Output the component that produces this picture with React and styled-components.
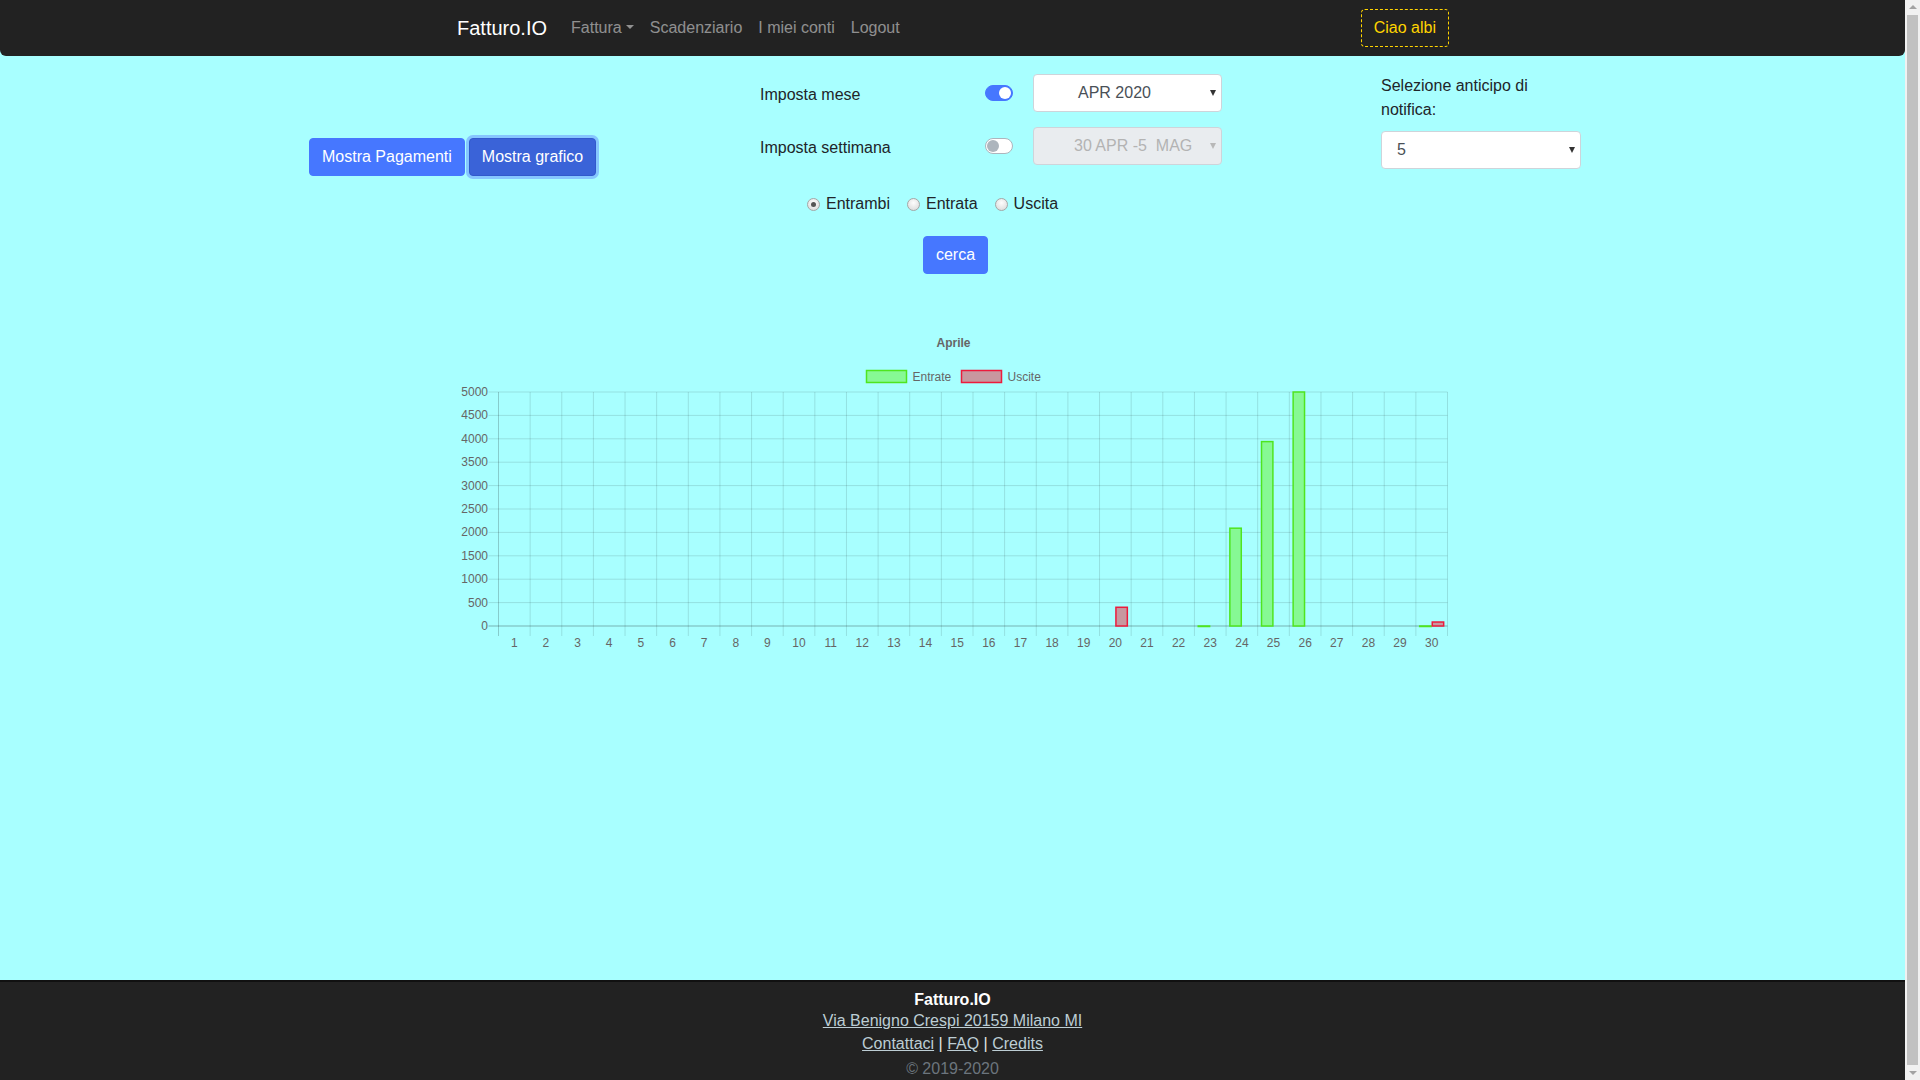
import React from "react";
import styled, { createGlobalStyle, css } from "styled-components";

const GlobalStyle = createGlobalStyle`
  * { box-sizing: border-box; }
  html, body { margin: 0; padding: 0; }
  body {
    font-family: "Liberation Sans", Arial, sans-serif;
    font-size: 16px;
    line-height: 1.5;
    color: #212529;
    background: #a8ffff;
    padding-right: 15px;
  }
`;

const entrate = { 23: 0, 24: 2090, 25: 3940, 26: 5000, 30: 0 };
const uscite = { 20: 400, 30: 85 };

export default function App() {
  return (
    <>
      <GlobalStyle />
      <Navbar>
        <Brand href="#">Fatturo.IO</Brand>
        <NavLink href="#" $dropdown>Fattura</NavLink>
        <NavLink href="#">Scadenziario</NavLink>
        <NavLink href="#">I miei conti</NavLink>
        <NavLink href="#">Logout</NavLink>
        <GreetButton>Ciao albi</GreetButton>
      </Navbar>

      <Main>
        <TopRow>
          {/* left buttons */}
          <LeftCol>
            <Button>Mostra Pagamenti</Button>
            <Button $active>Mostra grafico</Button>
          </LeftCol>

          {/* month / week */}
          <MiddleCol>
            <ControlRow>
              <RowLabel>Imposta mese</RowLabel>
              <Switch $on />
              <Select $w={189} $indent={44}>
                <SelectText>APR 2020</SelectText>
                <Caret />
              </Select>
            </ControlRow>
            <ControlRow>
              <RowLabel>Imposta settimana</RowLabel>
              <Switch />
              <Select $w={189} $indent={40} $disabled>
                <SelectText>30 APR -5&nbsp; MAG</SelectText>
                <Caret $disabled />
              </Select>
            </ControlRow>
          </MiddleCol>

          {/* notification */}
          <RightCol>
            <FieldLabel>Selezione anticipo di notifica:</FieldLabel>
            <Select $w={200} $indent={15}>
              <SelectText>5</SelectText>
              <Caret />
            </Select>
          </RightCol>
        </TopRow>

        <RadioRow>
          <RadioItem>
            <RadioDot $checked />
            Entrambi
          </RadioItem>
          <RadioItem>
            <RadioDot />
            Entrata
          </RadioItem>
          <RadioItem>
            <RadioDot />
            Uscita
          </RadioItem>
        </RadioRow>

        <SearchRow>
          <Button>cerca</Button>
        </SearchRow>

        <ChartWrap>
          <BarChart />
        </ChartWrap>
      </Main>

      <Footer>
        <FooterTitle>Fatturo.IO</FooterTitle>
        <FooterLine $h={22}>
          <FooterLink href="#">Via Benigno Crespi 20159 Milano MI</FooterLink>
        </FooterLine>
        <FooterLine>
          <FooterLink href="#">Contattaci</FooterLink> | <FooterLink href="#">FAQ</FooterLink> |{" "}
          <FooterLink href="#">Credits</FooterLink>
        </FooterLine>
        <Copy>© 2019-2020</Copy>
      </Footer>

      <Scrollbar>
        <ScrollArrow />
        <ScrollThumb />
        <ScrollArrow $down />
      </Scrollbar>
    </>
  );
}

// chart
const X0 = 45.5;
const X1 = 994.5;
const Y0 = 296;
const YT = 62;
const CAT = (X1 - X0) / 30;
const yOf = (v) => Y0 - (v / 5000) * (Y0 - YT);
const days = Array.from({ length: 30 }, (_, i) => i + 1);
const ticks = Array.from({ length: 11 }, (_, i) => i * 500);

function BarChart() {
  return (
    <ChartSvg width="1000" height="330" viewBox="0 0 1000 330">
      <text x="500.5" y="13" textAnchor="middle" dominantBaseline="central" className="title">
        Aprile
      </text>

      {/* legend */}
      <rect x="413.5" y="40.5" width="40" height="12" fill="#86f994" stroke="#4fe51f" strokeWidth="1.5" />
      <text x="459.5" y="46.5" dominantBaseline="central">Entrate</text>
      <rect x="508.5" y="40.5" width="40" height="12" fill="#c8979f" stroke="#ec1b3c" strokeWidth="1.5" />
      <text x="554.5" y="46.5" dominantBaseline="central">Uscite</text>

      {/* grid */}
      {ticks.map((v) => (
        <line
          key={"h" + v}
          x1={X0 - 10}
          x2={X1}
          y1={yOf(v)}
          y2={yOf(v)}
          stroke={v === 0 ? "rgba(0,0,0,0.3)" : "rgba(0,0,0,0.12)"}
          strokeWidth="1"
        />
      ))}
      {Array.from({ length: 31 }, (_, i) => (
        <line
          key={"v" + i}
          x1={X0 + i * CAT}
          x2={X0 + i * CAT}
          y1={YT}
          y2={Y0 + 10}
          stroke={i === 0 ? "rgba(0,0,0,0.2)" : "rgba(0,0,0,0.12)"}
          strokeWidth="1"
        />
      ))}

      {ticks.map((v) => (
        <text key={"yl" + v} x="35" y={yOf(v)} textAnchor="end" dominantBaseline="central">
          {v}
        </text>
      ))}
      {days.map((d) => (
        <text key={"xl" + d} x={X0 + (d - 0.5) * CAT} y="313" textAnchor="middle" dominantBaseline="central">
          {d}
        </text>
      ))}

      {/* bars */}
      {Object.entries(entrate).map(([d, v]) => {
        const x = X0 + (d - 1) * CAT + 3.8;
        const y = yOf(v);
        return (
          <rect
            key={"e" + d}
            x={x}
            y={y}
            width="11.4"
            height={Math.max(Y0 - y, 0.5)}
            fill="#86f994"
            stroke="#4fe51f"
            strokeWidth="1.5"
          />
        );
      })}
      {Object.entries(uscite).map(([d, v]) => {
        const x = X0 + (d - 1) * CAT + 16.4;
        const y = yOf(v);
        return (
          <rect
            key={"u" + d}
            x={x}
            y={y}
            width="11.4"
            height={Y0 - y}
            fill="#c8979f"
            stroke="#ec1b3c"
            strokeWidth="1.5"
          />
        );
      })}
    </ChartSvg>
  );
}

const Navbar = styled.nav`
  height: 56px;
  background: #222;
  border-radius: 0 0 6px 6px;
  display: flex;
  align-items: center;
  padding: 0 456px 0 457px;
`;

const Brand = styled.a`
  font-size: 20px;
  line-height: 30px;
  color: #fff;
  margin-right: 16px;
  text-decoration: none;
`;

const NavLink = styled.a`
  color: rgba(255, 255, 255, 0.5);
  padding: 8px;
  text-decoration: none;
  ${(p) =>
    p.$dropdown &&
    css`
      &::after {
        content: "";
        display: inline-block;
        margin-left: 0.255em;
        vertical-align: 0.255em;
        border-top: 0.3em solid;
        border-right: 0.3em solid transparent;
        border-left: 0.3em solid transparent;
      }
    `}
`;

const GreetButton = styled.button`
  margin-left: auto;
  font: inherit;
  line-height: 24px;
  padding: 6px 12px;
  background: transparent;
  color: #ffd400;
  border: 1px dashed #ffd400;
  border-radius: 4px;
`;

const Main = styled.main`
  min-height: 924px;
  padding-top: 18px;
`;

const TopRow = styled.div`
  display: flex;
  align-items: flex-start;
  padding-left: 309px;
`;

const LeftCol = styled.div`
  width: 451px;
  padding-top: 64px;
  display: flex;
  gap: 4px;
`;

const Button = styled.button`
  font: inherit;
  font-size: 16px;
  line-height: 24px;
  padding: 6px 12px;
  color: #fff;
  border-radius: 4px;
  border: 1px solid ${(p) => (p.$active ? "#3159cc" : "#4677ff")};
  background: ${(p) => (p.$active ? "#3a63d8" : "#4677ff")};
  box-shadow: ${(p) => (p.$active ? "0 0 0 3px #86c6ff" : "none")};
`;

const MiddleCol = styled.div`
  width: 621px;
  display: flex;
  flex-direction: column;
  gap: 15px;
`;

const ControlRow = styled.div`
  display: flex;
  align-items: center;
  height: 38px;
`;

const RowLabel = styled.span`
  width: 225px;
  padding-top: 3px;
`;

const Switch = styled.span`
  width: 28px;
  height: 16px;
  border-radius: 8px;
  margin-right: 20px;
  display: flex;
  align-items: center;
  padding: 0 1px;
  justify-content: ${(p) => (p.$on ? "flex-end" : "flex-start")};
  border: 1px solid ${(p) => (p.$on ? "#4677ff" : "#adb5bd")};
  background: ${(p) => (p.$on ? "#4677ff" : "#fff")};
  &::after {
    content: "";
    width: 12px;
    height: 12px;
    border-radius: 50%;
    background: ${(p) => (p.$on ? "#fff" : "#adb5bd")};
  }
`;

const Select = styled.div`
  width: ${(p) => p.$w}px;
  height: 38px;
  display: flex;
  align-items: center;
  padding: 0 5px 0 ${(p) => p.$indent}px;
  border: 1px solid #ced4da;
  border-radius: 4px;
  background: ${(p) => (p.$disabled ? "#e9ecef" : "#fff")};
  color: ${(p) => (p.$disabled ? "#b3b3b3" : "#495057")};
`;

const SelectText = styled.span`
  flex: 1;
  white-space: pre;
`;

const Caret = styled.span`
  width: 0;
  height: 0;
  border-left: 3.5px solid transparent;
  border-right: 3.5px solid transparent;
  border-top: 6px solid ${(p) => (p.$disabled ? "#b8b8b8" : "#333")};
`;

const RightCol = styled.div`
  width: 200px;
`;

const FieldLabel = styled.label`
  display: block;
  margin-bottom: 9px;
`;

const RadioRow = styled.div`
  display: flex;
  justify-content: center;
  padding-right: 33px;
  margin-top: 16px;
  line-height: 24px;
`;

const RadioItem = styled.label`
  display: inline-flex;
  align-items: center;
  margin-right: 12px;
`;

const RadioDot = styled.span`
  width: 13px;
  height: 13px;
  margin: 0 6px 0 5px;
  border-radius: 50%;
  border: 1px solid #a6a6a6;
  background: radial-gradient(circle at 50% 35%, #fdfdfd 0%, #d6d6d6 100%);
  display: flex;
  align-items: center;
  justify-content: center;
  &::after {
    content: "";
    width: 5px;
    height: 5px;
    border-radius: 50%;
    background: ${(p) => (p.$checked ? "#555" : "transparent")};
  }
`;

const SearchRow = styled.div`
  display: flex;
  justify-content: center;
  margin-top: 20px;
  padding-left: 6px;
`;

const ChartWrap = styled.div`
  width: 1000px;
  margin: 56px auto 0;
`;

const ChartSvg = styled.svg`
  display: block;
  text {
    font-family: "Liberation Sans", Arial, sans-serif;
    font-size: 12px;
    fill: #666;
  }
  text.title {
    font-weight: bold;
  }
`;

const Footer = styled.footer`
  background: #222;
  border-top: 2px solid #111;
  text-align: center;
  padding: 8px 0 10px;
  color: #e6e6e6;
`;

const FooterTitle = styled.div`
  font-weight: bold;
  color: #fff;
  line-height: 20px;
`;

const FooterLine = styled.div`
  line-height: ${(p) => p.$h || 24}px;
`;

const FooterLink = styled.a`
  color: #bccdd4;
  text-decoration: underline;
`;

const Copy = styled.div`
  color: #6c757d;
  line-height: 26px;
`;

// browser-like scrollbar on the right edge
const Scrollbar = styled.div`
  position: fixed;
  top: 0;
  right: 0;
  width: 15px;
  height: 100vh;
  background: #f1f1f1;
  display: flex;
  flex-direction: column;
  align-items: center;
  padding: 5px 0;
  gap: 6px;
`;

const ScrollArrow = styled.span`
  width: 0;
  height: 0;
  border-left: 4px solid transparent;
  border-right: 4px solid transparent;
  ${(p) =>
    p.$down
      ? css`
          border-top: 4px solid #a3a3a3;
        `
      : css`
          border-bottom: 4px solid #a3a3a3;
        `}
`;

const ScrollThumb = styled.span`
  flex: 1;
  width: 11px;
  background: #c1c1c1;
`;
